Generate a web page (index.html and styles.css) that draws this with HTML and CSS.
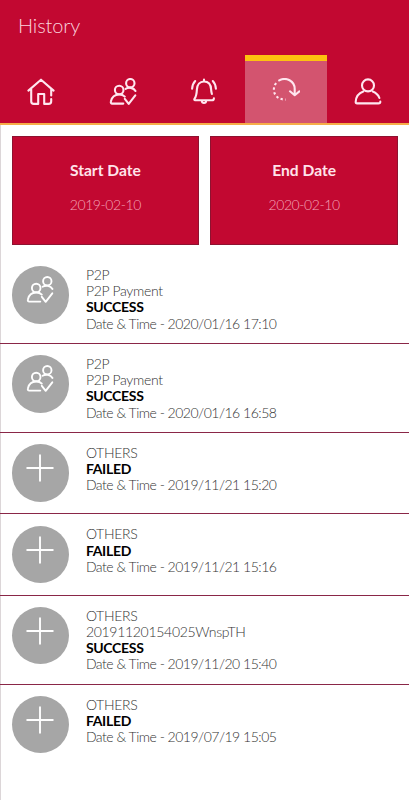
FILE: index.html
```html
<!DOCTYPE html>
<html lang="en">
	<head>
		<title>History</title>
		<meta charset="UTF-8">
		<meta name="viewport" content="width=device-width, initial-scale=1">
		<link rel="stylesheet" href="styles.css">
	</head>
	<body>
		<!-- shared icons -->
		<svg class="defs">
			<symbol id="people" viewBox="0 0 28 28">
				<circle cx="21.3" cy="5.2" r="4.2" />
				<circle cx="10.2" cy="12" r="4.3" />
				<path d="M14.3 25.6H3.3C2 25.6 1.6 24.6 1.9 23.4C2.8 19.2 6 16.5 10.2 16.5C12.6 16.5 14.5 17.2 15.8 18.6M16.6 10.8C19.5 9 24.6 9.4 26.5 13M15.8 20.8L19.7 25.8L26.3 17.3" />
			</symbol>
			<symbol id="plus" viewBox="0 0 28 28">
				<path d="M14 1.2V26.8M1.2 14H26.8" />
			</symbol>
		</svg>
		<header class="header">
			<h1 class="title">History</h1>
			<nav class="tabs">
				<a class="tab">
					<svg class="icon" viewBox="0 0 28 28">
						<path d="M1.4 12.6L14 1.7L26.6 12.6M4.2 11V23.2Q4.2 25.9 6.8 25.9H11.2V16H17.2V25.9H21.5Q24.2 25.9 24.2 23.2V21M24.2 11V17.4" />
					</svg>
				</a>
				<a class="tab">
					<svg class="icon"><use href="#people" /></svg>
				</a>
				<a class="tab">
					<svg class="icon" viewBox="0 0 28 28">
						<path d="M23.9 20.4Q23.8 22.3 22 22.3H5.2C4.2 22.3 4 21.5 4.6 20.6C6.4 18.2 6.7 15.8 6.9 11.4C7.1 6.6 9.8 3.5 14 3.5C18.3 3.5 20.9 6.6 21.1 11.4C21.2 13.4 21.4 14.4 21.9 16M14 3V1.6M11.8 22.8C12 25.8 16 25.8 16.2 22.8M5.2 3C3.2 5 2.3 7.6 2.1 10.8M22.8 3C24.8 5 25.7 7.6 25.9 10.8" />
					</svg>
				</a>
				<a class="tab active">
					<svg class="icon" viewBox="0 0 28 28">
						<path d="M7.2 2.4C14.2-1.4 22.7 3 22.7 11V16.6M18 13.3L22.7 17.2L27.4 13.3" />
						<path class="dots" d="M4.2 5.1C1.2 8.6 1.2 13.8 3.6 17.1C5.7 20.2 8.9 21.6 13.8 21.6" />
					</svg>
				</a>
				<a class="tab">
					<svg class="icon" viewBox="0 0 28 28">
						<circle cx="14" cy="7.4" r="6" />
						<path d="M9.3 13.5C5 15 2 19.2 1.7 23.7C1.6 24.9 2.1 25.4 3.1 25.4H24.5C25.8 25.4 26.4 24.7 26.3 23.6M18.7 13.5C22 14.8 24.3 16.8 25.4 20" />
					</svg>
				</a>
			</nav>
		</header>
		<main class="content">
			<div class="dates">
				<div class="date">
					<b>Start Date</b>
					<span>2019-02-10</span>
				</div>
				<div class="date">
					<b>End Date</b>
					<span>2020-02-10</span>
				</div>
			</div>
			<ul class="list">
				<li class="item">
					<div class="badge"><svg class="icon"><use href="#people" /></svg></div>
					<div class="details">
						<div>P2P</div>
						<div>P2P Payment</div>
						<div class="status">SUCCESS</div>
						<div class="time">Date &amp; Time - 2020/01/16 17:10</div>
					</div>
				</li>
				<li class="item">
					<div class="badge"><svg class="icon"><use href="#people" /></svg></div>
					<div class="details">
						<div>P2P</div>
						<div>P2P Payment</div>
						<div class="status">SUCCESS</div>
						<div class="time">Date &amp; Time - 2020/01/16 16:58</div>
					</div>
				</li>
				<li class="item">
					<div class="badge"><svg class="icon"><use href="#plus" /></svg></div>
					<div class="details">
						<div>OTHERS</div>
						<div class="status">FAILED</div>
						<div class="time">Date &amp; Time - 2019/11/21 15:20</div>
					</div>
				</li>
				<li class="item">
					<div class="badge"><svg class="icon"><use href="#plus" /></svg></div>
					<div class="details">
						<div>OTHERS</div>
						<div class="status">FAILED</div>
						<div class="time">Date &amp; Time - 2019/11/21 15:16</div>
					</div>
				</li>
				<li class="item">
					<div class="badge"><svg class="icon"><use href="#plus" /></svg></div>
					<div class="details">
						<div>OTHERS</div>
						<div>20191120154025WnspTH</div>
						<div class="status">SUCCESS</div>
						<div class="time">Date &amp; Time - 2019/11/20 15:40</div>
					</div>
				</li>
				<li class="item">
					<div class="badge"><svg class="icon"><use href="#plus" /></svg></div>
					<div class="details">
						<div>OTHERS</div>
						<div class="status">FAILED</div>
						<div class="time">Date &amp; Time - 2019/07/19 15:05</div>
					</div>
				</li>
			</ul>
		</main>
	</body>
</html>
```
FILE: styles.css
```css
* {
	box-sizing: border-box;
}
body {
	margin: 0;
	height: 800px;
	overflow: hidden;
	display: flex;
	flex-direction: column;
	background: #fff;
	font-family: Lato, "Liberation Sans", sans-serif;
	font-weight: 300;
}
.defs {
	display: none;
}
.header {
	height: 125px;
	background: #c20831;
	border-bottom: 2px solid #f6ad48;
}
.title {
	margin: 0;
	height: 55px;
	padding: 13px 0 0 18px;
	font-size: 20px;
	line-height: 25px;
	font-weight: 300;
	letter-spacing: -0.1px;
	color: #fbd3dd;
}
.tabs {
	display: grid;
	grid-template-columns: repeat(5, 1fr);
	height: 68px;
}
.tab {
	display: flex;
	justify-content: center;
	padding-top: 22.5px;
}
.tab.active {
	padding-top: 16.5px;
	background: #d3546f;
	border-top: 6px solid #fdc210;
}
.icon {
	width: 28px;
	height: 28px;
	fill: none;
	stroke: #ffe6ef;
	stroke-width: 2.1;
	stroke-linecap: round;
	stroke-linejoin: round;
}
.dots {
	stroke-linecap: butt;
	stroke-dasharray: 2.4 2.4;
}
.content {
	flex: 1;
	box-shadow: inset 1px 0 #dcd6d8;
}
.dates {
	display: grid;
	grid-template-columns: 1fr 1fr;
	gap: 11px;
	padding: 11px 11px 10px 11.5px;
}
.date {
	display: flex;
	flex-direction: column;
	align-items: center;
	height: 109px;
	padding-top: 23px;
	background: #c20831;
	border: 1px solid #8e1230;
	color: #ffe3ea;
	font-size: 15.6px;
	line-height: 20px;
}
.date b {
	font-weight: 700;
}
.date span {
	margin-top: 15px;
	font-size: 14px;
	letter-spacing: -0.4px;
	color: #f3a5b8;
}
.list {
	margin: 0;
	padding: 0;
	list-style: none;
}
.item {
	display: flex;
	gap: 17px;
	padding: 11.4px 11.7px 11.8px;
	border-bottom: 1px solid #8a2747;
}
.item:last-child {
	border-bottom: 0;
}
.badge {
	flex: none;
	display: flex;
	justify-content: center;
	width: 57.2px;
	height: 57.2px;
	padding-top: 9.8px;
	border-radius: 50%;
	background: #a6a6a6;
}
.badge .icon {
	stroke: #fff;
	stroke-width: 1.9;
}
.details {
	padding-top: 0.6px;
	margin-bottom: -0.6px;
	font-size: 14px;
	line-height: 16.2px;
	letter-spacing: -0.3px;
	color: #333;
}
.status {
	font-weight: 700;
	color: #000;
}
.time {
	letter-spacing: -0.5px;
}
```
